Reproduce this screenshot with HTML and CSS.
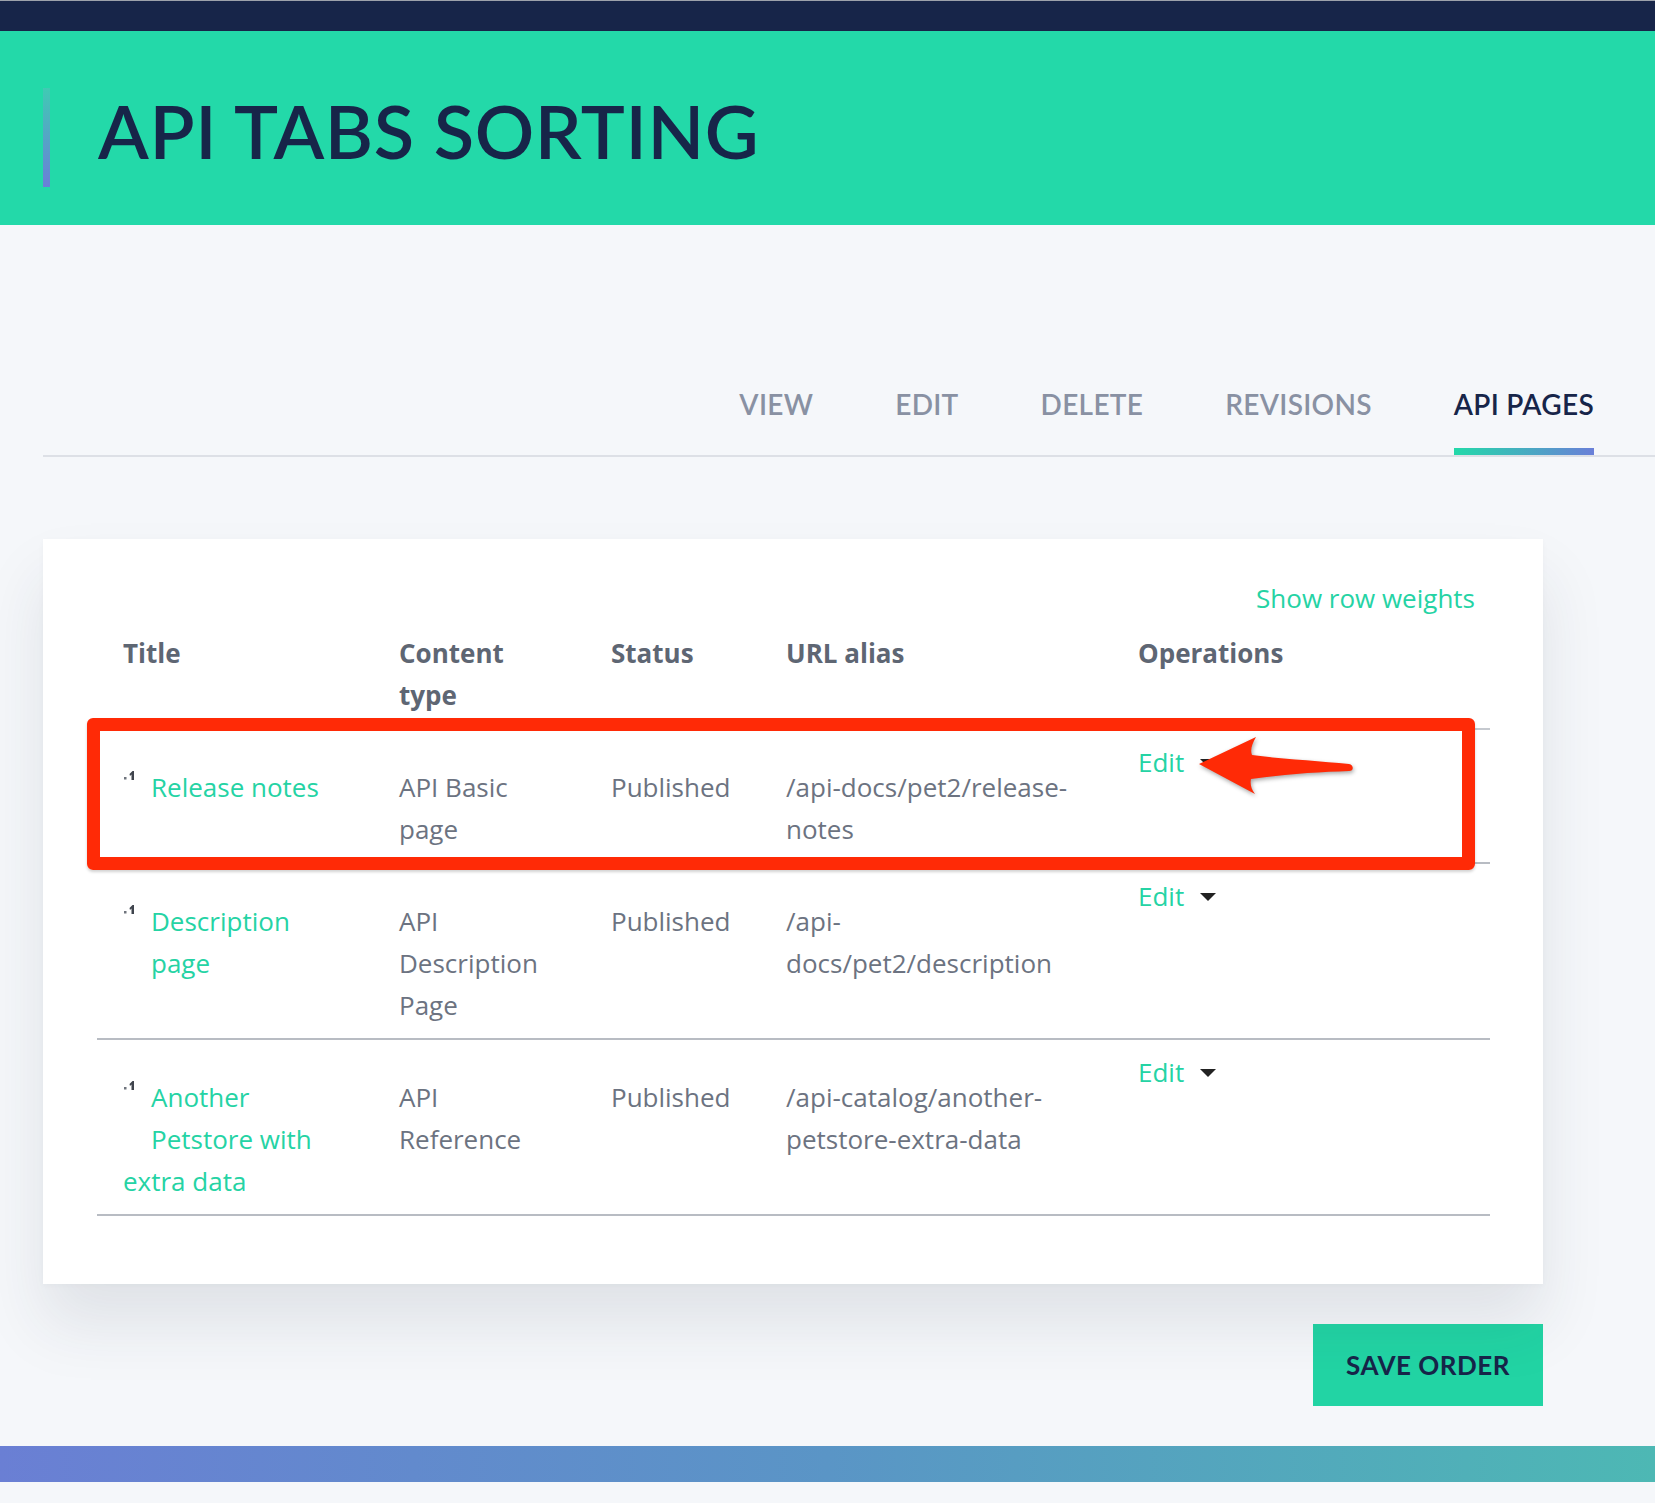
FILE: index.html
```html
<!DOCTYPE html>
<html lang="en">
<head>
<meta charset="utf-8">
<title>API tabs sorting</title>
<link rel="stylesheet" href="styles.css">
</head>
<body>
<div class="topbar"></div>
<header class="hero">
  <span class="hero-accent"></span>
  <h1 class="hero-title">API TABS SORTING</h1>
</header>

<nav class="tabs">
  <ul class="tab-list">
    <li><a class="tab" href="#">VIEW</a></li>
    <li><a class="tab" href="#">EDIT</a></li>
    <li><a class="tab" href="#">DELETE</a></li>
    <li><a class="tab" href="#">REVISIONS</a></li>
    <li><a class="tab is-active" href="#">API PAGES</a></li>
  </ul>
</nav>

<main class="content">
  <section class="card">
    <div class="weights"><a href="#" class="link">Show row weights</a></div>
    <table class="pages">
      <colgroup>
        <col class="c-title"><col class="c-type"><col class="c-status"><col class="c-url"><col class="c-ops">
      </colgroup>
      <thead>
        <tr>
          <th>Title</th>
          <th>Content type</th>
          <th>Status</th>
          <th>URL alias</th>
          <th>Operations</th>
        </tr>
      </thead>
      <tbody>
        <tr>
          <td><span class="handle"><svg width="14" height="12" viewBox="0 0 14 12"><rect x="1" y="7" width="2.5" height="2.5" fill="#6f747d"/><path d="M6.5 4 L9.5 1 L11 1 L11 10 L8.5 10 L8.5 4.5 L7 6 Z" fill="#3f444d"/></svg></span><a href="#" class="link">Release notes</a></td>
          <td>API Basic page</td>
          <td>Published</td>
          <td>/api-docs/pet2/release-notes</td>
          <td class="ops"><a href="#" class="link">Edit</a><span class="caret"></span></td>
        </tr>
        <tr>
          <td><span class="handle"><svg width="14" height="12" viewBox="0 0 14 12"><rect x="1" y="7" width="2.5" height="2.5" fill="#6f747d"/><path d="M6.5 4 L9.5 1 L11 1 L11 10 L8.5 10 L8.5 4.5 L7 6 Z" fill="#3f444d"/></svg></span><a href="#" class="link">Description page</a></td>
          <td>API Description Page</td>
          <td>Published</td>
          <td>/api-docs/pet2/description</td>
          <td class="ops"><a href="#" class="link">Edit</a><span class="caret"></span></td>
        </tr>
        <tr>
          <td><span class="handle"><svg width="14" height="12" viewBox="0 0 14 12"><rect x="1" y="7" width="2.5" height="2.5" fill="#6f747d"/><path d="M6.5 4 L9.5 1 L11 1 L11 10 L8.5 10 L8.5 4.5 L7 6 Z" fill="#3f444d"/></svg></span><a href="#" class="link">Another Petstore with extra data</a></td>
          <td>API Reference</td>
          <td>Published</td>
          <td>/api-catalog/another-petstore-extra-data</td>
          <td class="ops"><a href="#" class="link">Edit</a><span class="caret"></span></td>
        </tr>
      </tbody>
    </table>

    <div class="highlight"></div>
    <svg class="arrow" width="165" height="70" viewBox="1193 729 165 70">
      <path d="M1199 764 L1256 737 C1252 744 1250 750 1252 755 C1282 759 1320 761 1349 764 C1354 765 1354 771 1349 771 C1320 772 1286 774 1251 779 C1250 784 1251 789 1255 794 Z" fill="#ff2a06"/>
    </svg>
  </section>

  <div class="actions">
    <button class="save" type="button">SAVE ORDER</button>
  </div>
</main>

<footer class="footer-bar"></footer>
</body>
</html>
```
FILE: styles.css
```css
* { box-sizing: border-box; }

html, body {
  margin: 0;
  padding: 0;
}

body {
  background: #f5f7fa;
  font-family: "Open Sans", "Liberation Sans", sans-serif;
  color: #6c7381;
}

.topbar {
  height: 31px;
  background: #172549;
  border-top: 1px solid #9da2ab;
}

.hero {
  height: 194px;
  background: #23d9a9;
  display: flex;
  align-items: flex-start;
  padding: 57px 0 0 43px;
  gap: 48px;
}

.hero-accent {
  display: block;
  width: 7px;
  height: 99px;
  background: linear-gradient(180deg, #3fcbb3 0%, #6a7fd8 100%);
  flex: none;
}

.hero-title {
  margin: -7px 0 0;
  font-family: "Lato", "Liberation Sans", sans-serif;
  font-weight: 600;
  font-size: 74px;
  line-height: 99px;
  color: #172549;
  letter-spacing: 0.6px;
}

.tabs {
  margin: 162px 0 0 43px;
  border-bottom: 2px solid #dde0e6;
}

.tab-list {
  list-style: none;
  margin: 0;
  padding: 0 61px 0 0;
  display: flex;
  justify-content: flex-end;
  gap: 82px;
}

.tab {
  display: block;
  font-family: "Lato", "Liberation Sans", sans-serif;
  font-weight: 600;
  font-size: 28px;
  line-height: 34px;
  letter-spacing: 0.3px;
  color: #8991a3;
  text-decoration: none;
  padding-bottom: 34px;
}

.tab.is-active {
  color: #172549;
  background: linear-gradient(90deg, #23d9a9 0%, #6a7fd8 100%) left bottom / 100% 7px no-repeat;
}

.content {
  margin: 82px 0 0 43px;
  width: 1500px;
}

.card {
  position: relative;
  background: #ffffff;
  padding: 38px 53px 68px 54px;
  box-shadow: 0 40px 60px rgba(40, 50, 70, 0.10), 0 2px 6px rgba(40, 50, 70, 0.03);
}

.weights {
  text-align: right;
  padding-right: 15px;
  font-size: 26px;
  line-height: 42px;
}

.link {
  color: #25d3a4;
  text-decoration: none;
}

.pages {
  width: 1393px;
  table-layout: fixed;
  border-collapse: collapse;
  font-size: 26px;
  line-height: 42px;
}

.c-title { width: 276px; }
.c-type { width: 212px; }
.c-status { width: 175px; }
.c-url { width: 352px; }
.c-ops { width: 378px; }

.pages th {
  text-align: left;
  font-weight: 700;
  color: #5e6673;
  padding: 13px 26px 12px;
  vertical-align: top;
  border-bottom: 2px solid #c5c9cf;
}

.pages td {
  padding: 36px 26px 12px;
  vertical-align: top;
  color: #6c7381;
  border-bottom: 2px solid #b8bcc3;
}

.pages td.ops {
  padding-top: 11px;
}

.handle {
  float: left;
  width: 28px;
  height: 70px;
  padding-top: 4px;
  line-height: 0;
}

.caret {
  display: inline-block;
  width: 0;
  height: 0;
  margin-left: 16px;
  vertical-align: middle;
  border-left: 8px solid transparent;
  border-right: 8px solid transparent;
  border-top: 8px solid #222222;
  position: relative;
  top: -2px;
}

.highlight {
  position: absolute;
  left: 44px;
  top: 179px;
  width: 1388px;
  height: 152px;
  border: 13px solid #ff2a06;
  border-radius: 6px;
  box-shadow: 0 2px 3px rgba(0, 0, 0, 0.18);
}

.arrow {
  position: absolute;
  left: 1150px;
  top: 190px;
  filter: drop-shadow(1px 2px 2px rgba(0, 0, 0, 0.35));
}

.actions {
  display: flex;
  justify-content: flex-end;
  margin-top: 40px;
}

.save {
  width: 230px;
  height: 82px;
  border: 0;
  background: #22d4a4;
  color: #172549;
  font-family: "Lato", "Liberation Sans", sans-serif;
  font-weight: 700;
  font-size: 26px;
  letter-spacing: 0.5px;
  cursor: pointer;
}

.footer-bar {
  margin-top: 40px;
  height: 36px;
  background: linear-gradient(90deg, #6a7fd4 0%, #5a95c6 50%, #4db8b4 100%);
}
```
